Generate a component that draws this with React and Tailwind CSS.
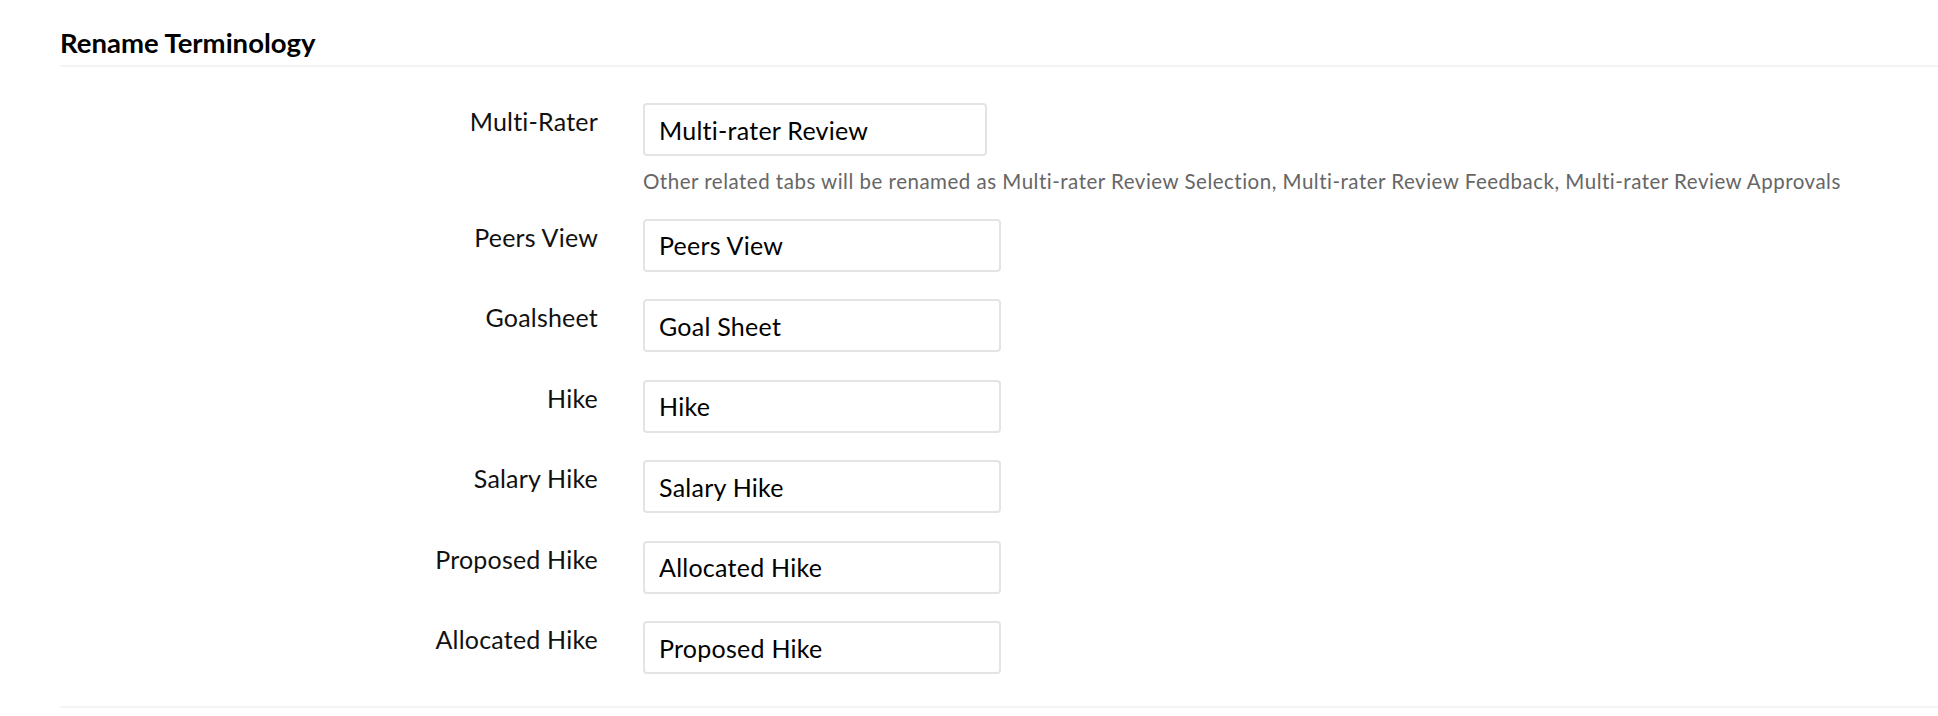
const rows = [
  { label: "Peers View", value: "Peers View" },
  { label: "Goalsheet", value: "Goal Sheet" },
  { label: "Hike", value: "Hike" },
  { label: "Salary Hike", value: "Salary Hike" },
  { label: "Proposed Hike", value: "Allocated Hike" },
  { label: "Allocated Hike", value: "Proposed Hike" },
];

function Field({ label, value, width, children }) {
  return (
    <div className="flex items-start gap-[45px]">
      <label className="w-[538px] shrink-0 pt-[3px] text-right text-[25px] leading-[1.2] tracking-[0.2px] text-[#111]">
        {label}
      </label>
      <div>
        <input
          defaultValue={value}
          className={`${width} h-[53px] rounded-[4px] border-2 border-[#e4e4e4] bg-white px-[14px] text-[25px] tracking-[0.25px] text-black outline-none`}
        />
        {children}
      </div>
    </div>
  );
}

export default function App() {
  return (
    <div className="min-h-screen bg-white pl-[60px] font-['Lato',sans-serif]">
      {/* Section heading */}
      <div className="border-b-2 border-[#f4f4f4] pt-[26px] pb-[6px]">
        <h2 className="text-[27.5px] font-bold leading-[1.2] text-black">Rename Terminology</h2>
      </div>

      {/* Fields */}
      <div className="border-b-2 border-[#f4f4f4] pt-[36px] pb-[32px]">
        <Field label="Multi-Rater" value="Multi-rater Review" width="w-[344px]">
          <p className="mt-[13px] whitespace-nowrap text-[20.5px] leading-[1.2] tracking-[0.5px] text-[#666]">
            Other related tabs will be renamed as Multi-rater Review Selection, Multi-rater Review Feedback, Multi-rater Review Approvals
          </p>
        </Field>
        <div className="mt-[25px] flex flex-col gap-[27.5px]">
          {rows.map((r) => (
            <Field key={r.label} label={r.label} value={r.value} width="w-[358px]" />
          ))}
        </div>
      </div>
    </div>
  );
}
